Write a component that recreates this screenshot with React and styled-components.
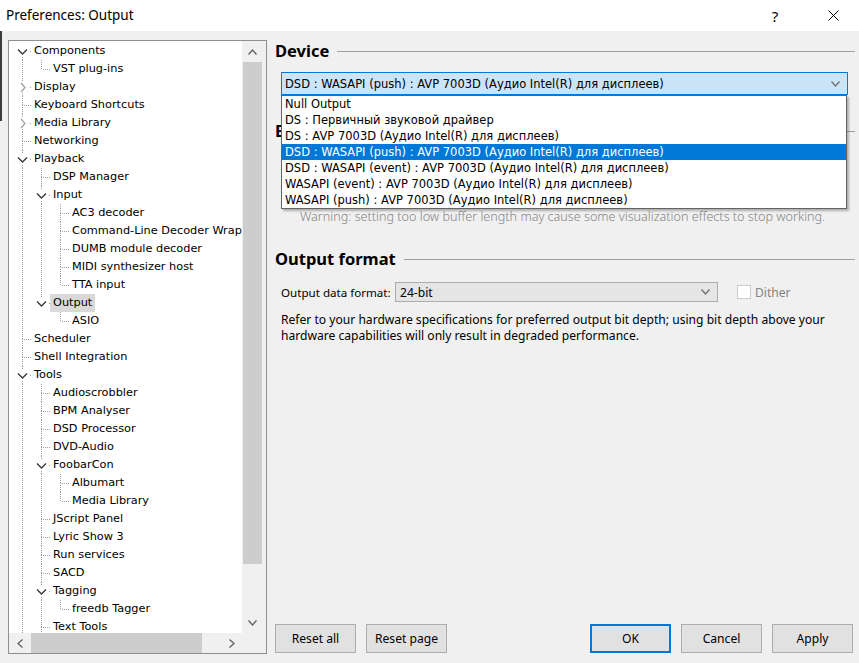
import React from 'react';
import styled, { createGlobalStyle } from 'styled-components';

const Global = createGlobalStyle`
  html, body { margin: 0; padding: 0; background: #f0f0f0; }
  body { width: 859px; height: 663px; overflow: hidden; }
  #root { width: 859px; height: 663px; }
  * { box-sizing: border-box; }
`;

const TAHOMA = '"DejaVu Sans", Tahoma, Verdana, sans-serif';
const SEGOE = '"Noto Sans", "Segoe UI", sans-serif';

const Window = styled.div`
  width: 859px;
  height: 663px;
  display: flex;
  flex-direction: column;
  background: #f0f0f0;
  font-family: ${SEGOE};
  color: #000;
`;

const TitleBar = styled.div`
  height: 31px;
  flex: none;
  background: #fff;
  display: flex;
  align-items: center;
  padding: 0 3px 0 6px;
`;

const Title = styled.div`
  flex: 1;
  font-size: 13.5px;
  padding-bottom: 1px;
`;

const TitleButton = styled.div`
  width: 46px;
  height: 31px;
  display: flex;
  align-items: center;
  justify-content: center;
  font-size: 15px;
  margin-left: ${(p) => p.$gap || 0}px;
`;

const Body = styled.div`
  flex: 1;
  min-height: 0;
  display: flex;
  padding: 9px 4px 9px 8px;
  background: linear-gradient(#3c3c3c, #3c3c3c) no-repeat 0 0 / 2px 90px, #f0f0f0;
`;

/* ---------- tree ---------- */
const TreeBox = styled.div`
  width: 259px;
  flex: none;
  border: 1px solid #8f8f8f;
  display: flex;
  flex-direction: column;
  background: #fff;
`;

const TreeMain = styled.div`
  flex: 1;
  min-height: 0;
  display: flex;
`;

const Viewport = styled.div`
  flex: 1;
  min-width: 0;
  overflow: hidden;
  background: #fff;
  padding-top: 1px;
`;

const TreeRow = styled.div`
  display: flex;
  align-items: center;
  height: 18px;
  white-space: nowrap;
`;

const Guides = styled.svg`
  flex: none;
  display: block;
`;

const NodeLabel = styled.span`
  display: block;
  height: 18px;
  line-height: 18px;
  padding: 0 3px;
  font-family: ${TAHOMA};
  font-size: 11.3px;
  background: ${(p) => (p.$selected ? '#d9d9d9' : 'transparent')};
`;

const VScroll = styled.div`
  width: 24px;
  flex: none;
  background: #f0f0f0;
  display: flex;
  flex-direction: column;
  padding-right: 3px;
`;

const HScroll = styled.div`
  height: 20px;
  flex: none;
  display: flex;
  background: #f0f0f0;
  padding-right: 24px;
`;

const ArrowBox = styled.div`
  flex: none;
  width: ${(p) => (p.$h ? '21px' : '100%')};
  height: ${(p) => (p.$h ? '100%' : '21px')};
  display: flex;
  align-items: center;
  justify-content: center;
`;

const Thumb = styled.div`
  flex: none;
  background: #cdcdcd;
  ${(p) =>
    p.$h
      ? `width: ${p.$len}px; margin-left: 1px; height: 100%;`
      : `height: ${p.$len}px; margin-left: 1px; width: 19px;`}
`;

const Track = styled.div`
  flex: 1;
`;

/* ---------- right panel ---------- */
const Panel = styled.div`
  flex: 1;
  min-width: 0;
  margin-left: 8px;
  display: flex;
  flex-direction: column;
`;

const SectionHeader = styled.div`
  display: flex;
  align-items: center;
  height: 22px;
  flex: none;
  margin-top: ${(p) => p.$top || 0}px;
`;

const SectionTitle = styled.div`
  font-weight: 700;
  font-size: 16.5px;
  white-space: nowrap;
  margin-top: -2px;
`;

const Rule = styled.div`
  flex: 1;
  height: 1px;
  background: #a0a0a0;
  margin-left: 8px;
`;

const ComboWrap = styled.div`
  position: relative;
  margin: 10px 7px 0 6px;
  height: 23px;
  flex: none;
`;

const Combo = styled.div`
  height: 100%;
  display: flex;
  align-items: center;
  padding: 0 7px 0 3px;
  background: ${(p) => (p.$active ? '#cce4f7' : '#e5e5e5')};
  border: 1px solid ${(p) => (p.$active ? '#0078d7' : '#adadad')};
  font-family: ${(p) => (p.$tahoma ? TAHOMA : SEGOE)};
  font-size: ${(p) => (p.$tahoma ? '11.5px' : '12.1px')};
  white-space: nowrap;
`;

const ComboText = styled.span`
  flex: 1;
`;

const Popup = styled.div`
  position: absolute;
  top: 100%;
  left: 0;
  right: 1px;
  background: #fff;
  border: 1px solid #646464;
  box-shadow: 2px 2px 2px rgba(0, 0, 0, 0.28);
  z-index: 5;
`;

const PopupItem = styled.div`
  height: 16px;
  line-height: 16px;
  padding-left: 3px;
  font-family: ${TAHOMA};
  font-size: 11.5px;
  white-space: nowrap;
  background: ${(p) => (p.$sel ? '#0078d7' : 'transparent')};
  color: ${(p) => (p.$sel ? '#fff' : '#000')};
`;

const HiddenArea = styled.div`
  height: 67px;
  flex: none;
`;

const Warning = styled.div`
  height: 16px;
  line-height: 16px;
  margin-left: 25px;
  font-size: 12.6px;
  font-weight: 300;
  color: #858585;
  white-space: nowrap;
  flex: none;
`;

const FormatRow = styled.div`
  display: flex;
  align-items: center;
  height: 20px;
  margin-top: 12px;
  padding-left: 6px;
  flex: none;
  font-size: 12.1px;
`;

const FieldLabel = styled.div`
  width: 114px;
  flex: none;
  white-space: nowrap;
  font-size: 11.6px;
`;

const SelectBox = styled(Combo)`
  width: 323px;
  flex: none;
  padding-left: 4px;
`;

const CheckBox = styled.div`
  width: 14px;
  height: 14px;
  margin-left: 19px;
  border: 1px solid #cccccc;
  background: #fff;
  flex: none;
`;

const CheckLabel = styled.div`
  margin-left: 4px;
  color: #838383;
  font-size: 12.1px;
`;

const Paragraph = styled.div`
  margin-top: 10px;
  padding-left: 6px;
  font-size: 12.1px;
  line-height: 16px;
  white-space: nowrap;
  flex: none;
`;

const ButtonRow = styled.div`
  margin-top: auto;
  margin-bottom: 1px;
  display: flex;
  gap: 10px;
  padding-right: 2px;
  flex: none;
`;

const Spacer = styled.div`
  flex: 1;
`;

const Button = styled.div`
  width: 81px;
  height: 29px;
  display: flex;
  align-items: center;
  justify-content: center;
  background: #e1e1e1;
  border: ${(p) => (p.$primary ? '2px solid #0078d7' : '1px solid #adadad')};
  font-size: 12.1px;
`;

/* ---------- data ---------- */
const treeRows = [
  [0, 'Components', 'open'],
  [1, 'VST plug-ins'],
  [0, 'Display', 'closed'],
  [0, 'Keyboard Shortcuts'],
  [0, 'Media Library', 'closed'],
  [0, 'Networking'],
  [0, 'Playback', 'open'],
  [1, 'DSP Manager'],
  [1, 'Input', 'open'],
  [2, 'AC3 decoder'],
  [2, 'Command-Line Decoder Wrapper'],
  [2, 'DUMB module decoder'],
  [2, 'MIDI synthesizer host'],
  [2, 'TTA input'],
  [1, 'Output', 'open', true],
  [2, 'ASIO'],
  [0, 'Scheduler'],
  [0, 'Shell Integration'],
  [0, 'Tools', 'open'],
  [1, 'Audioscrobbler'],
  [1, 'BPM Analyser'],
  [1, 'DSD Processor'],
  [1, 'DVD-Audio'],
  [1, 'FoobarCon', 'open'],
  [2, 'Albumart'],
  [2, 'Media Library'],
  [1, 'JScript Panel'],
  [1, 'Lyric Show 3'],
  [1, 'Run services'],
  [1, 'SACD'],
  [1, 'Tagging', 'open'],
  [2, 'freedb Tagger'],
  [1, 'Text Tools'],
];

function hasNext(i, k) {
  for (let j = i + 1; j < treeRows.length; j++) {
    const d = treeRows[j][0];
    if (d < k) return false;
    if (d === k) return true;
  }
  return k <= 1; // list continues below the visible area
}

const popupItems = [
  'Null Output',
  'DS : Первичный звуковой драйвер',
  'DS : AVP 7003D (Аудио Intel(R) для дисплеев)',
  'DSD : WASAPI (push) : AVP 7003D (Аудио Intel(R) для дисплеев)',
  'DSD : WASAPI (event) : AVP 7003D (Аудио Intel(R) для дисплеев)',
  'WASAPI (event) : AVP 7003D (Аудио Intel(R) для дисплеев)',
  'WASAPI (push) : AVP 7003D (Аудио Intel(R) для дисплеев)',
];

/* ---------- icons ---------- */
const LINE = '#a0a0a0';

function RowGuides({ i, depth, state }) {
  const w = 22 + 19 * depth;
  const x = 13 + 19 * depth + 0.5;
  const parts = [];
  for (let k = 0; k < depth; k++) {
    if (hasNext(i, k)) {
      const lx = 13 + 19 * k + 0.5;
      parts.push(<line key={'g' + k} x1={lx} y1={0} x2={lx} y2={18} />);
    }
  }
  if (i > 0) parts.push(<line key="top" x1={x} y1={0} x2={x} y2={9} />);
  if (hasNext(i, depth)) parts.push(<line key="bot" x1={x} y1={9} x2={x} y2={18} />);
  parts.push(<line key="h" x1={state ? x + 7 : x + 1} y1={9.5} x2={w} y2={9.5} />);
  return (
    <Guides width={w} height={18}>
      <g stroke={LINE} strokeWidth="1" strokeDasharray="1 1" shapeRendering="crispEdges">
        {parts}
      </g>
      {state && <rect x={x - 5.5} y={3} width={11} height={12} fill="#fff" />}
      {state === 'open' && (
        <polyline
          points={`${x - 4.5},${7.5} ${x},${12} ${x + 4.5},${7.5}`}
          fill="none"
          stroke="#3a3a3a"
          strokeWidth="1.4"
        />
      )}
      {state === 'closed' && (
        <polyline
          points={`${x - 1.5},${5} ${x + 2.5},${9.5} ${x - 1.5},${14}`}
          fill="none"
          stroke="#a6a6a6"
          strokeWidth="1.4"
        />
      )}
    </Guides>
  );
}

const Chevron = ({ dir = 'down', color = '#606060', size = 9 }) => {
  const s = size;
  const h = Math.round(s / 2) + 1;
  let pts;
  let w = s;
  let hh = h;
  if (dir === 'down') pts = `0.5,0.5 ${s / 2},${h - 1} ${s - 0.5},0.5`;
  if (dir === 'up') pts = `0.5,${h - 0.5} ${s / 2},1 ${s - 0.5},${h - 0.5}`;
  if (dir === 'left' || dir === 'right') {
    w = h;
    hh = s;
    pts =
      dir === 'right'
        ? `0.5,0.5 ${h - 1},${s / 2} 0.5,${s - 0.5}`
        : `${h - 0.5},0.5 1,${s / 2} ${h - 0.5},${s - 0.5}`;
  }
  return (
    <svg width={w} height={hh} style={{ display: 'block' }}>
      <polyline points={pts} fill="none" stroke={color} strokeWidth="1.3" />
    </svg>
  );
};

const CloseIcon = () => (
  <svg width="11" height="11" style={{ display: 'block' }}>
    <path d="M0.5 0.5 L10.5 10.5 M10.5 0.5 L0.5 10.5" stroke="#000" strokeWidth="1" />
  </svg>
);

export default function App() {
  return (
    <>
      <Global />
      <Window>
        <TitleBar>
          <Title>Preferences: Output</Title>
          <TitleButton>?</TitleButton>
          <TitleButton $gap={12}>
            <CloseIcon />
          </TitleButton>
        </TitleBar>
        <Body>
          <TreeBox>
            <TreeMain>
              <Viewport>
                {treeRows.map(([depth, label, state, sel], i) => (
                  <TreeRow key={i}>
                    <RowGuides i={i} depth={depth} state={state} />
                    <NodeLabel $selected={sel}>{label}</NodeLabel>
                  </TreeRow>
                ))}
              </Viewport>
              <VScroll>
                <ArrowBox>
                  <Chevron dir="up" />
                </ArrowBox>
                <Thumb $len={502} />
                <Track />
                <ArrowBox>
                  <Chevron dir="down" />
                </ArrowBox>
              </VScroll>
            </TreeMain>
            <HScroll>
              <ArrowBox $h>
                <Chevron dir="left" />
              </ArrowBox>
              <Thumb $h $len={171} />
              <Track />
              <ArrowBox $h>
                <Chevron dir="right" />
              </ArrowBox>
            </HScroll>
          </TreeBox>

          <Panel>
            <SectionHeader>
              <SectionTitle>Device</SectionTitle>
              <Rule />
            </SectionHeader>
            <ComboWrap>
              <Combo $active $tahoma>
                <ComboText>DSD : WASAPI (push) : AVP 7003D (Аудио Intel(R) для дисплеев)</ComboText>
                <Chevron dir="down" color="#707070" />
              </Combo>
              <Popup>
                {popupItems.map((t, i) => (
                  <PopupItem key={i} $sel={i === 3}>
                    {t}
                  </PopupItem>
                ))}
              </Popup>
            </ComboWrap>

            <SectionHeader $top={25}>
              <SectionTitle>Buffer length</SectionTitle>
              <Rule />
            </SectionHeader>
            <HiddenArea />
            <Warning>
              Warning: setting too low buffer length may cause some visualization effects to stop working.
            </Warning>

            <SectionHeader $top={23}>
              <SectionTitle>Output format</SectionTitle>
              <Rule />
            </SectionHeader>
            <FormatRow>
              <FieldLabel>Output data format:</FieldLabel>
              <SelectBox>
                <ComboText>24-bit</ComboText>
                <Chevron dir="down" color="#707070" />
              </SelectBox>
              <CheckBox />
              <CheckLabel>Dither</CheckLabel>
            </FormatRow>
            <Paragraph>
              Refer to your hardware specifications for preferred output bit depth; using bit depth above your
              <br />
              hardware capabilities will only result in degraded performance.
            </Paragraph>

            <ButtonRow>
              <Button>Reset all</Button>
              <Button>Reset page</Button>
              <Spacer />
              <Button $primary>OK</Button>
              <Button>Cancel</Button>
              <Button>Apply</Button>
            </ButtonRow>
          </Panel>
        </Body>
      </Window>
    </>
  );
}
